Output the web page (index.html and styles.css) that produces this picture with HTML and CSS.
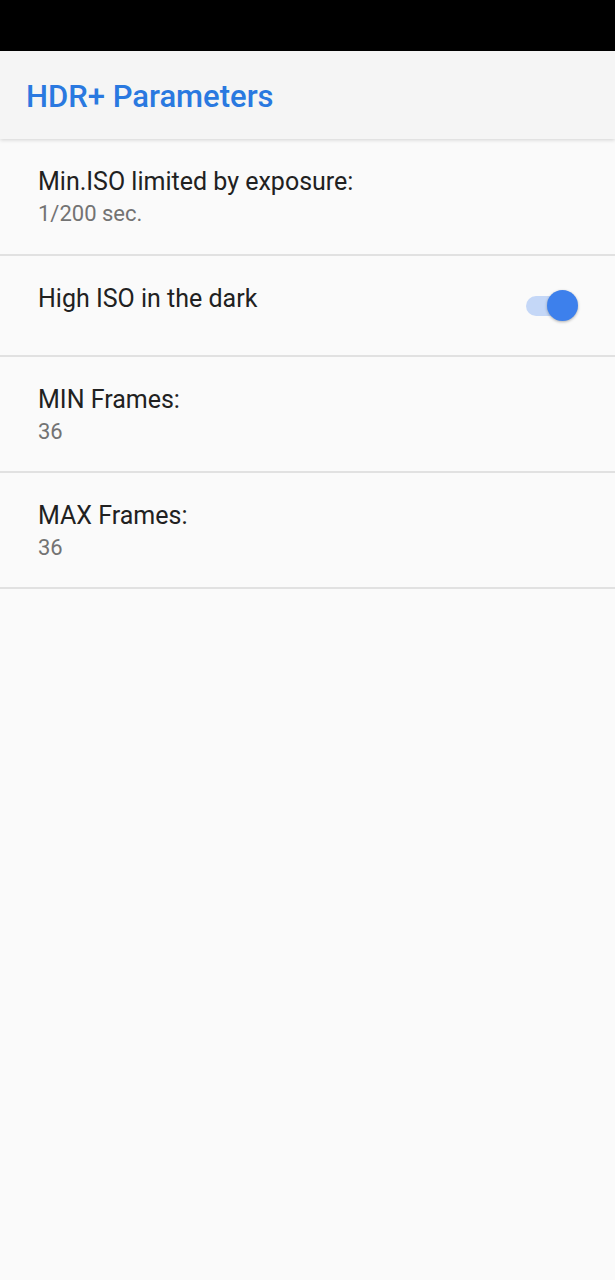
FILE: index.html
```html
<!DOCTYPE html>
<html>
<head>
<meta charset="utf-8">
<link rel="stylesheet" href="styles.css">
</head>
<body>
<div class="status"></div>
<header class="toolbar"><h1 class="toolbar-title">HDR+ Parameters</h1></header>
<main class="list">
  <div class="pref">
    <div class="pref-text">
      <div class="pref-title">Min.ISO limited by exposure:</div>
      <div class="pref-summary">1/200 sec.</div>
    </div>
  </div>
  <div class="pref pref-switch">
    <div class="pref-text">
      <div class="pref-title">High ISO in the dark</div>
    </div>
    <div class="switch">
      <div class="track"></div>
      <div class="thumb"></div>
    </div>
  </div>
  <div class="pref">
    <div class="pref-text">
      <div class="pref-title">MIN Frames:</div>
      <div class="pref-summary">36</div>
    </div>
  </div>
  <div class="pref">
    <div class="pref-text">
      <div class="pref-title">MAX Frames:</div>
      <div class="pref-summary">36</div>
    </div>
  </div>
</main>
</body>
</html>
```

FILE: styles.css
```css
html, body {
  margin: 0;
  padding: 0;
}
body {
  width: 615px;
  height: 1280px;
  background: #fafafa;
  font-family: Roboto, "Noto Sans", sans-serif;
  overflow: hidden;
}
.status {
  height: 51px;
  background: #000;
}
.toolbar {
  height: 88px;
  background: #f5f5f5;
  display: flex;
  align-items: center;
  padding: 3px 0 0 26px;
  box-sizing: border-box;
  box-shadow: 0 1px 4px rgba(0,0,0,0.16);
  position: relative;
  z-index: 1;
}
.toolbar-title {
  margin: 0;
  font-size: 31px;
  font-weight: 500;
  color: #2a79e0;
  line-height: 36px;
}
.list {
  display: flex;
  flex-direction: column;
}
.pref {
  display: flex;
  align-items: flex-start;
  height: 116px;
  box-sizing: border-box;
  padding: 28px 37px 0 38px;
  border-bottom: 2px solid #e1e1e1;
}
.pref:first-child {
  height: 117px;
}
.pref-switch {
  height: 101px;
  align-items: center;
  padding-top: 0;
}
.pref-switch .pref-text {
  align-self: flex-start;
  padding-top: 28px;
}
.pref-text {
  flex: 1;
}
.pref-title {
  font-size: 25px;
  line-height: 30px;
  color: #212121;
}
.pref-summary {
  margin-top: 2px;
  font-size: 22px;
  line-height: 30px;
  color: #737373;
}
.switch {
  position: relative;
  width: 52px;
  height: 31px;
}
.track {
  position: absolute;
  left: 0;
  right: 2px;
  top: 6px;
  height: 20px;
  border-radius: 10px;
  background: #c4d7f7;
}
.thumb {
  position: absolute;
  right: 0;
  top: 0;
  width: 31px;
  height: 31px;
  border-radius: 50%;
  background: #3d80ec;
  box-shadow: 0 1px 3px rgba(0,0,0,0.3);
}
```
